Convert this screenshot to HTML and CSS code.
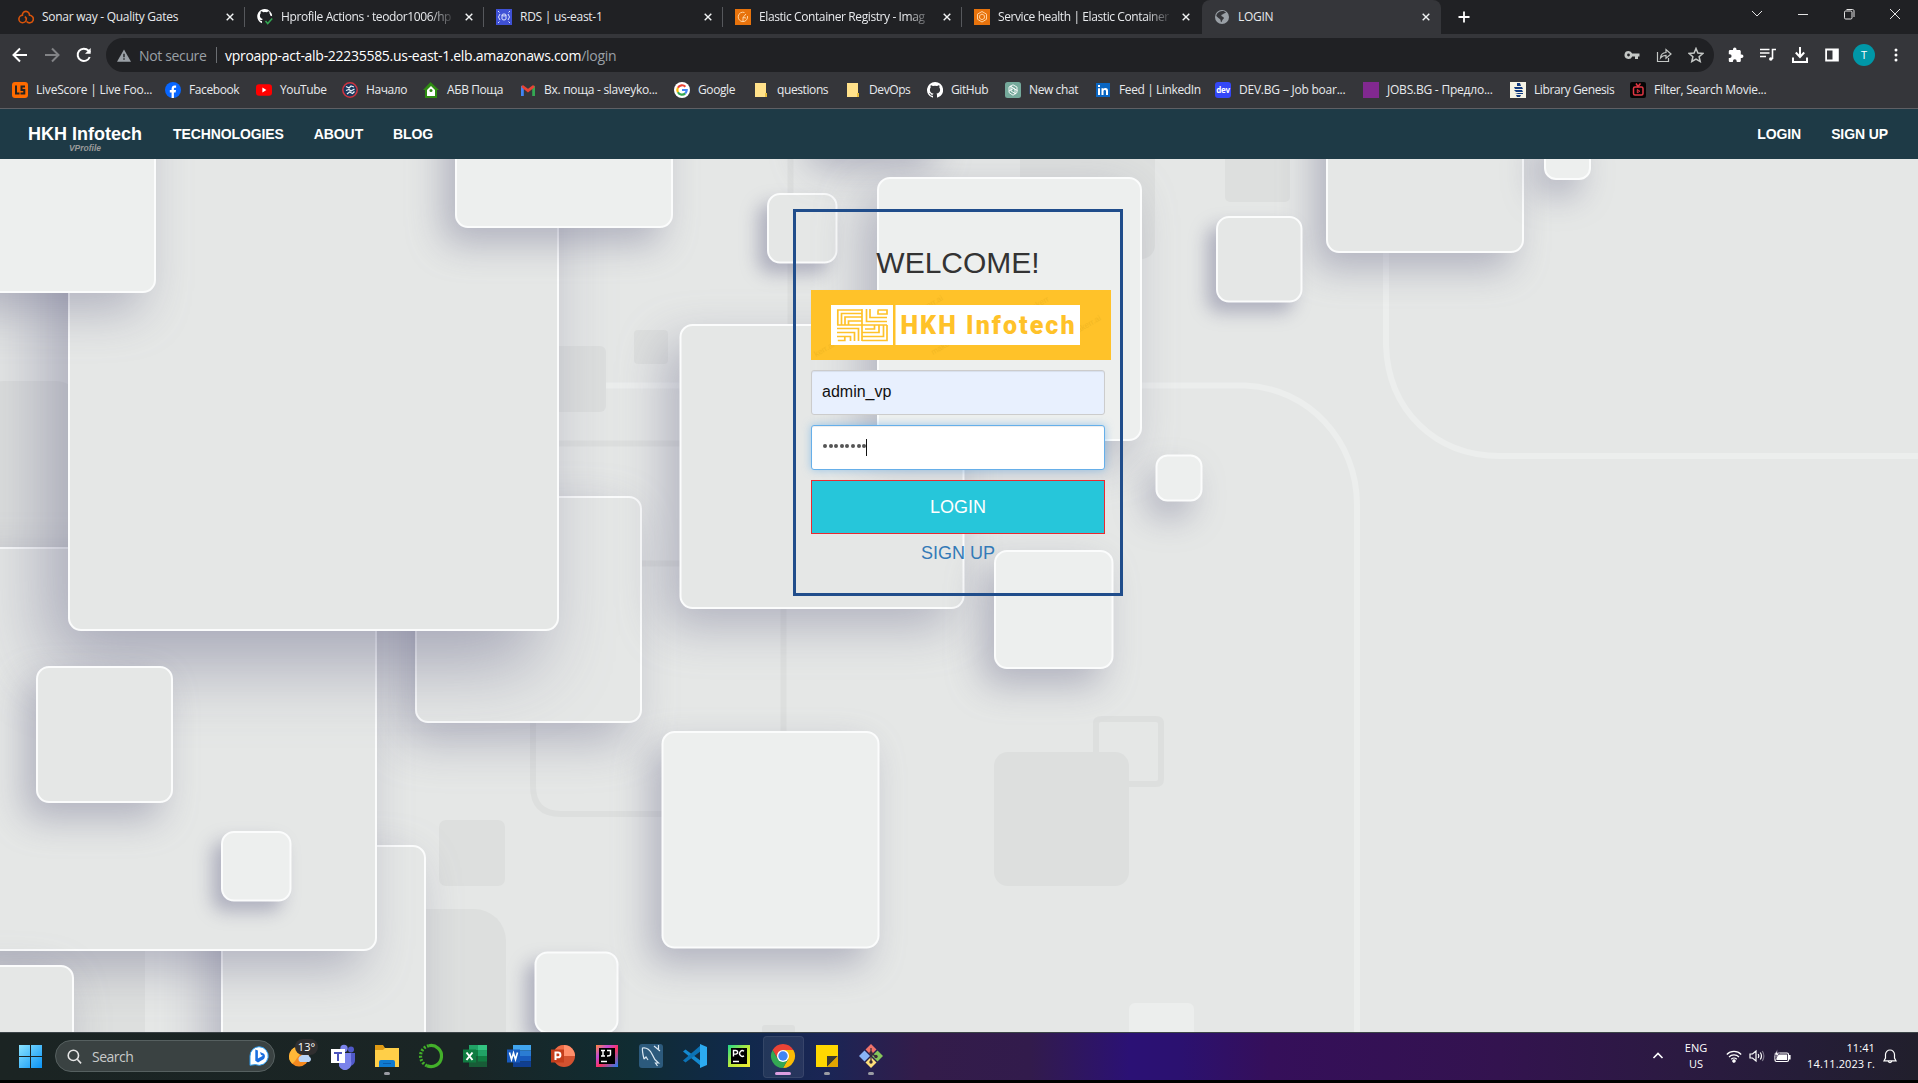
FILE: index.html
```html
<!DOCTYPE html>
<html lang="en">
<head>
<meta charset="utf-8">
<title>LOGIN</title>
<link rel="stylesheet" href="styles.css">
</head>
<body>
<header class="browser">
  <div class="tabs">
    <div class="tab">
      <svg class="ico" viewBox="0 0 16 16" fill="none" stroke="#d9540b" stroke-width="1.6"><path d="M4.600 7A3.500 3.500 0 1 1 11.300 6.800M4.800 6.300A3.700 3.700 0 1 0 8.300 10.200V8.500M7 7.500L8.300 9.500M11 6.300A3.800 3.800 0 1 1 8.600 12.500"/></svg>
      <span class="title">Sonar way - Quality Gates</span><svg class="close" viewBox="0 0 8 8"><path d="M.7.7l6.600 6.600M7.300.7L.7 7.300"/></svg>
    </div>
    <div class="tab">
      <svg class="ico" viewBox="0 0 16 16"><path fill="#fff" d="M8 0a7.400 7.400 0 0 0-3 14.300V12c-1.500 0-2-.6-2.500-1.500 1.100.2 1.500 1 2.600.6.1-.5.4-.8.7-1C3.900 9.800 2.900 8.500 2.900 6.600c0-1 .3-1.700.8-2.300-.1-.5-.1-1.200.2-2 1 0 1.600.5 2.200.9a8 8 0 0 1 3.900 0c.6-.4 1.300-.9 2.200-.9.3.8.3 1.500.2 2 .5.6.8 1.300.8 2.300l1.900.7A7.400 7.400 0 0 0 8 0z"/><path d="M8.500 12l2.200 2.600 4.500-5" fill="none" stroke="#34a853" stroke-width="1.500"/></svg>
      <span class="title fade">Hprofile Actions · teodor1006/hp</span><svg class="close" viewBox="0 0 8 8"><path d="M.7.7l6.600 6.600M7.300.7L.7 7.300"/></svg>
    </div>
    <div class="tab">
      <svg class="ico" viewBox="0 0 16 16"><path fill="#3f51d5" d="M0 0h16v16H0z"/><g fill="none" stroke="#dfe4ff"><ellipse cx="8" cy="6" rx="2" ry="1"/><path d="M6 6v4c0 1.300 4 1.300 4 0V6M4 5L2.500 8 4 11M12 5l1.500 3L12 11"/><path d="M2 2l1.500 1.500M14 2l-1.500 1.500M2 14l1.500-1.500M14 14l-1.500-1.500"/></g></svg>
      <span class="title">RDS | us-east-1</span><svg class="close" viewBox="0 0 8 8"><path d="M.7.7l6.600 6.600M7.300.7L.7 7.300"/></svg>
    </div>
    <div class="tab">
      <svg class="ico" viewBox="0 0 16 16"><path fill="#e8730c" d="M0 0h16v16H0z"/><g fill="none" stroke="#ffd2a0" stroke-width="1"><path d="M9.500 3.500A4.700 4.700 0 1 0 12.500 7M8 12V8.500l3-3.500M8 8.500L11 9"/></g></svg>
      <span class="title fade">Elastic Container Registry - Imag</span><svg class="close" viewBox="0 0 8 8"><path d="M.7.7l6.600 6.600M7.300.7L.7 7.300"/></svg>
    </div>
    <div class="tab">
      <svg class="ico" viewBox="0 0 16 16"><path fill="#e8730c" d="M0 0h16v16H0z"/><g fill="none" stroke="#ffd2a0" stroke-width="1"><path d="M8 2.500l4.500 2.600v5.200L8 13l-4.500-2.700V5.100z"/><path d="M8 5l2.400 1.500v2.800L8 10.700 5.600 9.300V6.500z"/></g></svg>
      <span class="title fade">Service health | Elastic Container</span><svg class="close" viewBox="0 0 8 8"><path d="M.7.7l6.600 6.600M7.300.7L.7 7.300"/></svg>
    </div>
    <div class="tab active">
      <svg class="ico" viewBox="0 0 16 16"><circle cx="8" cy="8" r="7" fill="#9aa0a6"/><path fill="#35363a" d="M8 2c1.500-.3 3 .4 4 1.400-.8.8-2 .5-2.500 1.400-.4.9-2 .6-2.200 1.700-.2.900 1.500 1 2.200 1.700.8.8.2 1.800-.7 2.200-.7.300-.6 2-1.500 2.800-.9-.5-.4-2-1-2.800C5.500 9.500 3.500 8.500 2.300 7 2.500 4.500 5 2.200 8 2z"/></svg>
      <span class="title">LOGIN</span><svg class="close" viewBox="0 0 8 8"><path d="M.7.7l6.600 6.600M7.300.7L.7 7.300"/></svg>
    </div>
    <svg class="plus" viewBox="0 0 12 12"><path d="M6 .5v11M.5 6h11"/></svg>
    <div class="winctl">
      <svg viewBox="0 0 12 12"><path d="M1 3l5 5 5-5"/></svg>
      <svg viewBox="0 0 12 12"><path d="M1 6.500h10"/></svg>
      <svg viewBox="0 0 12 12"><rect x="1.500" y="3" width="7.500" height="8" rx="1.200"/><path d="M3.500 1.500h6c1 0 1.500.6 1.500 1.500v6"/></svg>
      <svg viewBox="0 0 12 12"><path d="M1 1l10 10M11 1L1 11"/></svg>
    </div>
  </div>
  <div class="toolbar">
    <div class="navbtns">
      <svg viewBox="0 0 16 16"><path d="M15 8H2M8 1.500L1.500 8 8 14.500"/></svg>
      <svg class="off" viewBox="0 0 16 16"><path d="M1 8h13M8 1.500L14.500 8 8 14.500"/></svg>
      <svg viewBox="0 0 16 16"><path d="M13.700 10A6.200 6.200 0 1 1 12.500 3.700L14 5.200"/><path d="M14.700 1v5.700H9z" fill="#fff" stroke="none"/></svg>
    </div>
    <div class="omnibox">
      <svg class="warn" viewBox="0 0 16 14"><path fill="#9aa0a6" d="M8 0l8 14H0z"/><path fill="#202124" d="M7.200 5h1.600v4H7.200zM7.200 10.200h1.600v1.600H7.200z"/></svg>
      <span class="sec">Not secure</span><i class="bar"></i>
      <span class="url">vproapp-act-alb-22235585.us-east-1.elb.amazonaws.com<em>/login</em></span>
      <span class="obicons">
        <svg viewBox="0 0 16 16"><path fill="#c4c7c5" fill-rule="evenodd" d="M4.500 4a4 4 0 1 0 3.700 5.500H11V12h3V9.500h1.500v-3H8.200A4 4 0 0 0 4.500 4zm0 2.600a1.400 1.400 0 1 1 0 2.800 1.400 1.400 0 0 1 0-2.800z"/></svg>
        <svg viewBox="0 0 16 16" fill="none" stroke="#c4c7c5" stroke-width="1.200"><path d="M1.500 5v9.500h11V11M4.500 11c.3-3.500 2-5.300 5.500-5.500V2.500L15 7l-5 4.200V8.300C7.500 8.300 6 9 4.500 11z"/></svg>
        <svg viewBox="0 0 16 16" fill="none" stroke="#c4c7c5" stroke-width="1.500"><path d="M8 1.500l1.900 4.600 4.900.4-3.700 3.200 1.100 4.800L8 12l-4.200 2.500 1.100-4.800L1.200 6.500l4.900-.4z"/></svg>
      </span>
    </div>
    <div class="tools">
      <svg viewBox="0 0 16 16"><path fill="#fff" d="M13.700 7.400h-.9V4.600c0-.9-.6-1.500-1.500-1.500H8.500v-.9a1.700 1.700 0 0 0-3.500 0v.9H2.200C1.300 3.100.8 3.700.8 4.600v2.600h.9a1.900 1.900 0 0 1 0 3.800h-.9v2.700c0 .9.600 1.400 1.400 1.400h2.700v-.9a1.900 1.900 0 0 1 3.800 0v.9h2.600c.9 0 1.500-.6 1.500-1.400v-2.800h.9a1.750 1.750 0 0 0 0-3.500z"/></svg>
      <svg viewBox="0 0 16 16" fill="none" stroke="#fff" stroke-width="1.600"><path d="M0 2.500h9.500M0 6h9.500M0 9.500h6M12.500 12V2.500H16"/><circle cx="10.800" cy="12" r="1.800" fill="#fff" stroke="none"/></svg>
      <svg viewBox="0 0 16 16" fill="none" stroke="#fff" stroke-width="2"><path d="M8 0v9.500M3.800 5.500L8 10l4.200-4.500M1 10.500V15h14v-4.500"/></svg>
      <svg viewBox="0 0 16 16"><path fill="#fff" fill-rule="evenodd" d="M1.200 1.500h13.600v13H1.200zM3 3.500v9h5.500v-9z"/></svg>
      <span class="avatar">T</span>
      <svg viewBox="0 0 16 16" fill="#fff"><circle cx="8" cy="3" r="1.500"/><circle cx="8" cy="8" r="1.500"/><circle cx="8" cy="13" r="1.500"/></svg>
    </div>
  </div>
  <nav class="bookmarks">
    <a><svg class="ico" viewBox="0 0 16 16"><rect width="16" height="16" rx="3" fill="#ff6b00"/><path fill="none" stroke="#222" stroke-width="2" d="M4 3.500V11.500H7.500M13 4.500H9.500V8H12.300V11.500H8.500"/></svg>LiveScore | Live Foo...</a>
    <a><svg class="ico" viewBox="0 0 16 16"><circle cx="8" cy="8" r="8" fill="#0866ff"/><path fill="#fff" d="M6.600 16v-5.400H4.800V8.100h1.800V6.800c0-2.300 1.200-3.400 3-3.400.6 0 1.200.1 1.500.2v2.200h-1c-.9 0-1.200.5-1.200 1.200v1.100H11l-.4 2.500H8.900V16z"/></svg>Facebook</a>
    <a><svg class="ico" viewBox="0 0 16 16"><rect y="2.300" width="16" height="11.400" rx="3" fill="#f00"/><path fill="#fff" d="M6.400 5.600v4.800l4-2.400z"/></svg>YouTube</a>
    <a><svg class="ico" viewBox="0 0 16 16"><circle cx="8" cy="8" r="7.200" fill="#17385c" stroke="#cf3440" stroke-width="1.500"/><path d="M4 4.500l3 1.500 2-2 3 1M4 8.500l3-1 2 1.500 3.500-2M5 12l2.500-2 3 1.500 2-2" fill="none" stroke="#e8eef5" stroke-width="1.300"/></svg>Начало</a>
    <a><svg class="ico" viewBox="0 0 16 16"><path fill="#2e8b12" d="M7.500 0L16 8h-2v8H2V8H0z"/><path fill="#fff" d="M8 4L12 8v6H4V8z"/><circle cx="8" cy="8.500" r="1.500" fill="#2e8b12"/></svg>АБВ Поща</a>
    <a><svg class="ico" viewBox="0 0 16 16"><path fill="#4285f4" d="M1 3.500l2.800 2V14H1z"/><path fill="#34a853" d="M15 3.500l-2.800 2V14H15z"/><path fill="none" stroke="#ea4335" stroke-width="2.800" d="M2 4l6 4.700L14 4"/></svg>Вх. поща - slaveyko...</a>
    <a><svg class="ico" viewBox="0 0 16 16"><circle cx="8" cy="8" r="8" fill="#fff"/><g fill="none" stroke-width="2.200"><path stroke="#ea4335" d="M3.900 5.700A4.700 4.700 0 0 1 11.400 4.700"/><path stroke="#fbbc05" d="M3.900 5.700A4.700 4.700 0 0 0 3.900 10.300"/><path stroke="#34a853" d="M3.900 10.300A4.700 4.700 0 0 0 11.200 11.400"/><path stroke="#4285f4" d="M11.200 11.400A4.700 4.700 0 0 0 12.700 8H8"/></g></svg>Google</a>
    <a><svg class="ico" viewBox="0 0 16 16"><path fill="#ffe18a" d="M2 1h11v10.500h1V15H2z"/><path fill="#e7bd3e" d="M12 11h2v4h-2z"/></svg>questions</a>
    <a><svg class="ico" viewBox="0 0 16 16"><path fill="#ffe18a" d="M2 1h11v10.500h1V15H2z"/><path fill="#e7bd3e" d="M12 11h2v4h-2z"/></svg>DevOps</a>
    <a><svg class="ico" viewBox="0 0 16 16"><path fill="#fff" d="M8 0a8 8 0 0 0-2.500 15.600c.4.1.5-.2.500-.4v-1.500c-2.200.5-2.700-.9-2.700-.9-.4-.9-.9-1.200-.9-1.200-.7-.5.100-.5.100-.5.800.1 1.200.8 1.200.8.700 1.300 1.900.9 2.300.7.100-.5.300-.9.500-1.100-1.800-.2-3.600-.9-3.600-4 0-.8.300-1.600.8-2.100-.1-.2-.4-1 .1-2.100 0 0 .7-.2 2.200.8a7.500 7.500 0 0 1 4 0c1.500-1 2.200-.8 2.200-.8.500 1.100.2 1.900.1 2.100.5.600.8 1.300.8 2.100 0 3.100-1.900 3.800-3.700 4 .3.200.6.700.6 1.500v2.200c0 .2.100.5.600.4A8 8 0 0 0 8 0z"/></svg>GitHub</a>
    <a><svg class="ico" viewBox="0 0 16 16"><rect width="16" height="16" rx="2.500" fill="#75a99b"/><g fill="none" stroke="#fff" stroke-width=".9"><path d="M8 2.800l4 2.300v5.400l-4 2.700-4-2.700V5.100z"/><path d="M6 4v5l5 3M10 12V7L5 4M4 9l4.500-2.500 4 2"/></g></svg>New chat</a>
    <a><svg class="ico" viewBox="0 0 16 16"><rect x="1" y="1" width="14" height="14" fill="#0a66c2"/><path fill="#fff" d="M3 6.200h2V13H3zM3 3h2v2H3zM6.500 6.200h2v.9c.9-1.500 4.500-1.500 4.500 1.600V13h-2V9.300c0-1.800-2.500-1.600-2.500 0V13h-2z"/></svg>Feed | LinkedIn</a>
    <a><span class="dev">dev</span>DEV.BG – Job boar...</a>
    <a><svg class="ico" viewBox="0 0 16 16"><path fill="#812990" d="M0 0h16v16H0z"/></svg>JOBS.BG - Предло...</a>
    <a><svg class="ico" viewBox="0 0 16 16"><path fill="#f5f3e4" d="M0 0h16v16H0z"/><path fill="#123a7d" d="M7 1h3l1 3H7zM4 5h8l1 2H5zM4 8h8l1 2H6zM5 11h8v1H8zM6 13h5l-1 2H7z"/></svg>Library Genesis</a>
    <a><svg class="ico" viewBox="0 0 16 16"><rect width="16" height="16" rx="2" fill="#050505"/><g fill="none" stroke="#e23744" stroke-width="1.500"><rect x="3.500" y="5" width="9.500" height="8" rx="1.500"/><path d="M6 1.500l2 3 2.500-3"/><path d="M7.300 7.500v3.300l2.500-1.600z" stroke-width="1"/></g></svg>Filter, Search Movie...</a>
  </nav>
</header>

<div class="site-nav">
  <div class="brand">HKH Infotech<small>VProfile</small></div>
  <a>TECHNOLOGIES</a><a>ABOUT</a><a>BLOG</a>
  <a class="push">LOGIN</a><a>SIGN UP</a>
</div>

<main class="page">
  <svg class="scene" viewBox="0 159 1918 873" preserveAspectRatio="none">
    <rect y="159" width="1918" height="873" fill="#e5e7e6"/>
    <!-- flat background shapes -->
    <g fill="#dddfde">
      <rect x="-20" y="381" width="100" height="300" rx="24"/>
      <rect x="540" y="346" width="66" height="66" rx="6"/>
      <rect x="634" y="330" width="34" height="34" rx="4"/>
      <rect x="1020" y="100" width="135" height="159" rx="14"/>
      <rect x="1225" y="140" width="65" height="62" rx="5"/>
      <rect x="439" y="820" width="66" height="66" rx="7"/>
      <rect x="370" y="909" width="136" height="160" rx="32"/>
      <rect x="0" y="940" width="145" height="100"/>
      <rect x="762" y="1025" width="33" height="20" rx="3"/>
      <rect x="994" y="752" width="135" height="134" rx="14"/>
    </g>
    <g fill="none" stroke="#dddfde" stroke-width="6">
      <path d="M1096 752V724q0-5 5-5h55q5 0 5 5v55q0 5-5 5h-28"/>
      <path d="M540 443.500H700M630 563.500H700M783.500 600V740M790.500 159V330M533 715V786Q533 814 561 814H670"/>
    </g>
    <g fill="none" stroke="#eceeed" stroke-width="6">
      <path d="M606 385.500H690M1130 385.500H1245C1308 388 1357 440 1357 505V1040M1386 240V345C1388 410 1435 456 1500 456H1918"/>
    </g>
    <rect x="1129" y="1003" width="65" height="60" rx="6" fill="#eceeed"/>
    <!-- raised cards -->
    <g class="tile">
      <rect class="s-l" x="222" y="846" width="203" height="240" rx="12"/>
      <rect class="s-l" x="416" y="497" width="225" height="225" rx="12"/>
      <rect class="s-l" x="-30" y="548" width="406" height="402" rx="12"/>
      <rect class="s-l" x="-30" y="966" width="103" height="120" rx="12"/>
      <rect class="s-xl" x="69" y="60" width="489" height="570" rx="12"/>
      <rect class="s-m" x="37" y="667" width="135" height="135" rx="12"/>
      <rect class="s-m" x="1327" y="60" width="196" height="192" rx="12"/>
      <rect class="s-l" x="680.500" y="325" width="283" height="283" rx="12"/>
      <rect class="s-s" x="768" y="194" width="68.500" height="68.500" rx="12"/>
      <rect class="s-s" x="1217" y="217" width="84.500" height="84.500" rx="12"/>
    </g>
    <g class="tile light">
      <rect class="s-l" x="-30" y="60" width="185" height="232" rx="12"/>
      <rect class="s-m" x="456" y="60" width="216" height="167" rx="12"/>
      <rect class="s-m" x="820" y="90" width="125" height="62" rx="12"/>
      <rect class="s-l" x="878" y="178" width="263" height="262" rx="12"/>
      <rect class="s-s" x="222" y="832" width="68.500" height="68.500" rx="12"/>
      <rect class="s-s" x="535.500" y="952.500" width="82" height="80" rx="12"/>
      <rect class="s-m" x="662.500" y="732" width="216" height="215.500" rx="12"/>
      <rect class="s-m" x="995" y="551" width="117.500" height="117" rx="12"/>
      <rect class="s-f" x="1156.500" y="455.500" width="45" height="45" rx="11"/>
      <rect class="s-f" x="1545" y="130" width="45" height="49" rx="11"/>
    </g>
  </svg>
  <form class="login">
    <h2>WELCOME!</h2>
    <svg class="logo" viewBox="0 0 300 70">
      <path fill="#ffc229" d="M0 0h300v70H0z"/>
      <g class="wm" fill="#f3b823"><text transform="translate(104 26) rotate(-30)">makerr.ai</text><text transform="translate(122 65) rotate(-30)">makerr</text><text transform="translate(217 23) rotate(-30)">makerr</text><text transform="translate(262 46) rotate(-30)">makerr.ai</text><text transform="translate(5 67) rotate(-30)">kerr.ai</text></g>
      <path fill="#fff" d="M20 15h62v40H20zM84.500 15H269v40H84.500z"/>
      <g fill="none" stroke="#ffc229" stroke-width="1.700">
        <path d="M26.800 35V20H51M30.500 35V23.500H51M34 35v-8H51M37.500 35v-4H51M51 19v32M26 35H76M55.500 19v12.500H76M59 19v8.500H76M62.500 19v0M67 20.500V24h9V20h-9.500M26 38.500H47.500V51M26 42.500H43.500V51M26 46.500H39.500V51M26.800 50.500h7V47M51 50.500H76V35M51 46.500H72.500V35M51 42.500H68V35M54 39H63.500V35"/>
      </g>
      <text class="lt" x="89.500" y="44" textLength="174">HKH Infotech</text>
    </svg>
    <div class="field user">admin_vp</div>
    <div class="field pass"><span class="dots"><i></i><i></i><i></i><i></i><i></i><i></i><i></i><i></i></span><span class="caret"></span></div>
    <div class="btn">LOGIN</div>
    <a class="signup">SIGN UP</a>
  </form>
</main>

<footer class="taskbar">
  <svg class="start" viewBox="0 0 23 23"><defs><linearGradient id="w" x2="1" y2="1"><stop stop-color="#8be4ff"/><stop offset="1" stop-color="#0a93f5"/></linearGradient></defs><path fill="url(#w)" d="M0 0h11v11H0zM12 0h11v11H12zM0 12h11v11H0zM12 12h11v11H12z"/></svg>
  <div class="search">
    <svg class="mag" viewBox="0 0 16 16"><circle cx="6.800" cy="6.800" r="5.500"/><path d="M11 11l4 4.300"/></svg>
    <span>Search</span>
    <svg class="bing" viewBox="0 0 20 20"><path fill="#fff" stroke="#2a9bf0" d="M10 .7a9.300 9.300 0 1 1-3.600 17.900L1 19.300V10A9.200 9.200 0 0 1 10 .7z"/><path fill="#1b6fe0" d="M6.300 3.500l2.600 1v8l5-2.800-2-1-.9-2.600 4 1.600c1.600 1.800 1 4.300-.5 5.500L9 16.500l-2.700-1.800z"/></svg>
  </div>
  <div class="apps">
    <span><svg viewBox="0 0 32 32"><circle cx="16" cy="16.500" r="10" fill="#f58a1f"/><path fill="#ffb838" d="M16 6.500a10 10 0 0 0-7 17c3-1 4-5 8-9z"/><path fill="#b9d4f6" d="M17 22a3.500 3.500 0 0 1 1-6.300 5 5 0 0 1 8.500 1A2.900 2.900 0 0 1 26 22z"/></svg><b class="deg">13°</b></span>
    <span><svg viewBox="0 0 32 32"><circle cx="17" cy="8.500" r="3.700" fill="#7b83eb"/><circle cx="24" cy="9.500" r="3" fill="#5059c9"/><path fill="#5059c9" d="M20 13h8v7c0 4-3 6-6 6z"/><path fill="#7b83eb" d="M12 13h12v8a6 6 0 0 1-12 5z"/><rect x="4" y="9" width="14" height="14" fill="#fff"/><path fill="#4b53bc" d="M7 12h8v2h-3v7h-2v-7H7z"/></svg></span>
    <span class="run"><svg viewBox="0 0 32 32"><path fill="#e09b14" d="M4 5h8l2 3h14v5H4z"/><path fill="#ffcf48" d="M4 10h8l2-2h14v19H4z"/><path fill="#0f7ad0" d="M8 27v-5q0-2 2-2h12q2 0 2 2v5z"/><path stroke="#0a5cab" d="M12 23.500h8"/></svg></span>
    <span><svg viewBox="0 0 32 32" fill="none" stroke="#43b02a" stroke-width="3.200"><path d="M14 5.700A10.500 10.500 0 1 1 12 25.700"/><path stroke-dasharray="2 1.500" d="M12 25.700A10.500 10.500 0 0 1 14 5.700"/></svg></span>
    <span><svg viewBox="0 0 32 32"><path fill="#21a366" d="M10 5h18v5.500H10z"/><path fill="#107c41" d="M10 10h18v6H10z"/><path fill="#185c37" d="M10 16h18v11H10z"/><path fill="#33c481" d="M19 5h9v5.500h-9z"/><path fill="#21a366" d="M19 10.500h9V16h-9z"/><path fill="#107c41" d="M19 16h9v5.500h-9z"/><rect x="4" y="9.500" width="13" height="13" fill="#107c41"/><path stroke="#fff" stroke-width="2" d="M7.500 12.500l6 7.500M13.500 12.500l-6 7.500"/></svg></span>
    <span><svg viewBox="0 0 32 32"><path fill="#41a5ee" d="M10 5h18v5.500H10z"/><path fill="#2b7cd3" d="M10 10.500h18V16H10z"/><path fill="#185abd" d="M10 16h18v5.500H10z"/><path fill="#103f91" d="M10 21.500h18V27H10z"/><rect x="4" y="9.500" width="13" height="13" fill="#185abd"/><path fill="none" stroke="#fff" stroke-width="1.600" d="M6.500 12.500l2 7 2-6.500 2 6.500 2-7"/></svg></span>
    <span><svg viewBox="0 0 32 32"><circle cx="17" cy="16" r="11" fill="#d35230"/><path fill="#ff8f6b" d="M17 5a11 11 0 0 1 11 11H17z"/><path fill="#ed6c47" d="M17 5a11 11 0 0 0-11 11h11z"/><rect x="4" y="9.500" width="13" height="13" fill="#c43e1c"/><path fill="none" stroke="#fff" stroke-width="2" d="M8.500 20v-7.500H11a2.400 2.400 0 0 1 0 4.800H8.500"/></svg></span>
    <span><svg viewBox="0 0 32 32"><defs><linearGradient id="ij" x2="1" y2="1"><stop stop-color="#ff8a3c"/><stop offset=".3" stop-color="#c24bd6"/><stop offset=".55" stop-color="#fe315d"/><stop offset="1" stop-color="#1d7ff7"/></linearGradient></defs><path fill="url(#ij)" d="M5 5h22v22H5z"/><path d="M8 8h16v16H8z"/><path fill="none" stroke="#fff" stroke-width="1.400" d="M10 10.500h4M12 10.500v5.500M10 16h4M16 10.500h3.500v4q0 1.500-3.500 1.500M10 21.500h6"/></svg></span>
    <span><svg viewBox="0 0 32 32"><rect x="4" y="4" width="24" height="24" rx="3" fill="#2c5a7c"/><path fill="none" stroke="#dbe8f2" stroke-width="1.200" d="M9 19c-1-4-2-8-1.500-11 4-1 8 2 10 7 1 3 2 5 6 8h-3l2 3M9 19l2-2 2 3M19 6l6 5M23.500 5v4"/></svg></span>
    <span><svg viewBox="0 0 32 32"><path fill="#1489d0" d="M4 11.500l2.500-2L22 21v5z"/><path fill="#0c72b5" d="M4 20.500L22 5v6L6.500 22.500z"/><path fill="#2cabf1" d="M21 4l7 3v18l-7 3z"/></svg></span>
    <span><svg viewBox="0 0 32 32"><defs><linearGradient id="pc" x2="1" y2="1"><stop stop-color="#21d789"/><stop offset=".5" stop-color="#b9ea3b"/><stop offset="1" stop-color="#f5ec32"/></linearGradient></defs><path fill="url(#pc)" d="M5 5h22v22H5z"/><path d="M8 8h16v16H8z"/><path fill="none" stroke="#fff" stroke-width="1.400" d="M10.500 16.500v-6h2.300a1.800 1.800 0 0 1 0 3.600h-2.300M21 11.200a2.800 2.800 0 1 0 0 4.600M10 21.500h6"/></svg></span>
    <span class="cur"><svg viewBox="0 0 32 32"><path fill="#ea4335" d="M16 4a12 12 0 0 1 10.400 6H16L10.800 19 5.600 10A12 12 0 0 1 16 4z"/><path fill="#fbbc05" d="M26.400 10A12 12 0 0 1 16 28l5.200-9L16 10z"/><path fill="#34a853" d="M5.600 10A12 12 0 0 0 16 28l5.200-9H10.800z"/><circle cx="16" cy="16" r="6" fill="#fff"/><circle cx="16" cy="16" r="4.700" fill="#4285f4"/></svg></span>
    <span class="run"><svg viewBox="0 0 32 32"><path fill="#ffd800" d="M5 5h22v22H5z"/><path fill="#3b3a30" d="M16 27V16h11z"/><path fill="#e3a500" d="M16 27L27 16v11z"/></svg></span>
    <span class="run"><svg viewBox="0 0 32 32"><path fill="#f0726a" d="M16 4l5.500 5.500L16 15l-5.500-5.500z"/><path fill="#8ab4f8" d="M9.500 10.500L15 16l-5.500 5.500L4 16z"/><path fill="#86c65b" d="M22.500 10.500L28 16l-5.500 5.500L17 16z"/><path fill="#ffe07a" d="M16 17l5.500 5.500L16 28l-5.500-5.500z"/><g fill="#3a2b38"><circle cx="16" cy="13" r="1.700"/><circle cx="16" cy="22" r="1.700"/><circle cx="21" cy="16.500" r="1.700"/><path d="M15.400 8h1.200v14h-1.200zM16 12l5 4-.8 1-5-4z"/></g></svg></span>
  </div>
  <div class="tray">
    <svg class="up" viewBox="0 0 12 12"><path d="M1.500 8L6 3.500 10.500 8"/></svg>
    <div class="lang">ENG<br>US</div>
    <svg class="wifi" viewBox="0 0 16 14"><path d="M.8 5.500a10 10 0 0 1 14.400 0M3 8a7 7 0 0 1 10 0M5.200 10.200a4 4 0 0 1 5.600 0"/><circle cx="8" cy="12" r="1.200" fill="#fff"/></svg>
    <svg class="snd" viewBox="0 0 16 14"><path d="M1 5h2.500L7 2v10L3.500 9H1zM9.200 5q1.300 2 0 4M11.300 3.500q2.400 3.500 0 7"/><path opacity=".4" d="M13.300 2q3.200 5 0 10"/></svg>
    <svg class="bat" viewBox="0 0 17 14"><rect x="1" y="4" width="13.500" height="8.500" rx="1.500"/><path fill="#fff" d="M3 6h9.500v4.500H3zM15 6.500h1v3.500h-1z"/><path fill="#fff" stroke="#2a1b40" stroke-width=".6" d="M3.500.5L0 6h2.500L1.500 9.500 5.500 4H3.200z"/></svg>
    <div class="clock">11:41<br>14.11.2023 г.</div>
    <svg class="bell" viewBox="0 0 14 15"><path d="M7 1a4.500 4.500 0 0 0-4.500 4.500V9L1 11.800h12L11.500 9V5.500A4.500 4.500 0 0 0 7 1zM5 12q2 3.500 4 0"/></svg>
  </div>
</footer>
</body>
</html>
```
FILE: styles.css
```css
* { box-sizing: border-box; }
body {
  margin: 0; width: 1918px; height: 1083px; overflow: hidden; background: #000;
  display: flex; flex-direction: column;
  font-family: "Open Sans", "Noto Sans", sans-serif; color: #fff;
}
svg { display: block; flex: none; }

/* browser chrome */
.browser { height: 109px; background: #35363a; border-bottom: 1px solid #5f6064; display: flex; flex-direction: column; font-size: 12px; }
.tabs { height: 34px; background: #202124; display: flex; align-items: center; padding-left: 6px; }
.tab { width: 239px; height: 34px; display: flex; align-items: center; padding: 0 11px 0 12px; position: relative; }
.tab::after { content: ""; position: absolute; right: 0; top: 7px; width: 1px; height: 20px; background: #56585c; }
.tab.active::after, .tab:nth-child(5)::after { display: none; }
.tab.active { background: #35363a; border-radius: 8px 8px 0 0; margin-left: 1px; }
.ico { width: 16px; height: 16px; }
.title { flex: 1; margin-left: 8px; margin-right: 8px; white-space: nowrap; letter-spacing: -.27px; color: #e8eaed; line-height: 20px; }
.title.fade { letter-spacing: -.4px; -webkit-mask-image: linear-gradient(90deg, #000 84%, rgba(0, 0, 0, .15) 97%); mask-image: linear-gradient(90deg, #000 84%, rgba(0, 0, 0, .15) 97%); }
.close { width: 8px; height: 8px; stroke: #f1f3f4; stroke-width: 1.4; }
.plus { width: 12px; height: 12px; stroke: #fff; stroke-width: 1.8; margin-left: 17px; }
.winctl { margin-left: auto; display: flex; gap: 34px; padding: 0 17px 6px 0; }
.winctl svg { width: 12px; height: 12px; fill: none; stroke: #e4e4e4; stroke-width: 1; }
.toolbar { height: 42px; display: flex; align-items: center; }
.navbtns { width: 106px; display: flex; gap: 16px; padding-left: 12px; }
.navbtns svg { width: 16px; height: 16px; fill: none; stroke: #fff; stroke-width: 2; }
.navbtns .off { stroke: #828386; }
.omnibox { width: 1608px; height: 34px; border-radius: 17px; background: #202124; display: flex; align-items: center; padding: 0 10px 0 11px; font-size: 14px; }
.warn { width: 14px; height: 13px; }
.sec { width: 68px; margin-left: 8px; color: #9aa0a6; letter-spacing: -.35px; white-space: nowrap; }
.bar { width: 1px; height: 16px; background: #6b6e72; margin: 0 8px 0 9px; }
.url { letter-spacing: -.29px; }
.url em { font-style: normal; color: #9aa0a6; }
.obicons { margin-left: auto; display: flex; gap: 16px; }
.obicons svg { width: 16px; height: 16px; }
.tools { display: flex; gap: 16px; align-items: center; padding-left: 14px; }
.tools svg { width: 16px; height: 16px; }
.avatar { width: 22px; height: 22px; border-radius: 50%; background: #0097a7; margin: 0 -3px; text-align: center; line-height: 22px; font-size: 11px; }
.bookmarks {
  height: 27px; display: grid; padding-left: 12px; align-items: center;
  grid-template-columns: 153px 91px 86px 81px 97px 154px 79px 92px 82px 78px 90px 120px 148px 147px 120px 150px;
}
.bookmarks a { display: flex; align-items: center; gap: 8px; white-space: nowrap; letter-spacing: -.4px; line-height: 16px; color: #e8eaed; }
.bookmarks a:nth-child(1), .bookmarks a:nth-child(14), .bookmarks a:nth-child(13) { letter-spacing: -.22px; }
.bookmarks a:nth-child(6), .bookmarks a:nth-child(16) { letter-spacing: -.28px; }
.dev { width: 16px; height: 16px; border-radius: 3px; background: #3447f7; color: #fff; font-weight: 700; font-size: 8px; line-height: 15px; text-align: center; flex: none; }

/* site navigation */
.site-nav { height: 50px; background: #1e3a46; display: flex; align-items: center; padding: 0 30px 0 28px; gap: 30px; font: bold 14px "Liberation Sans", Arial, sans-serif; letter-spacing: -.1px; }
.brand { font-size: 18px; line-height: 20px; position: relative; margin-right: 1px; letter-spacing: 0; }
.brand small { position: absolute; left: 0; right: 0; top: 20px; text-align: center; font: italic bold 8.500px/8px "Liberation Sans", Arial, sans-serif; color: #9a9a9a; }
.push { margin-left: auto; }

/* page */
.page { height: 873px; position: relative; padding-top: 50px; font-family: "Liberation Sans", Arial, sans-serif; overflow: hidden; }
.scene { position: absolute; left: 0; top: 0; width: 1918px; height: 873px; }
.tile rect { fill: #e5e7e6; stroke: #fbfcfc; stroke-width: 2; }
.tile.light rect { fill: #edefee; }
.tile .s-xl { filter: drop-shadow(-22px 34px 38px rgba(88, 88, 125, .44)); }
.tile .s-l { filter: drop-shadow(-14px 18px 24px rgba(88, 88, 125, .36)); }
.tile .s-m { filter: drop-shadow(-12px 16px 18px rgba(88, 88, 125, .36)); }
.tile .s-s { filter: drop-shadow(-9px 10px 9px rgba(88, 88, 125, .38)); }
.tile .s-f { filter: drop-shadow(-10px 17px 16px rgba(88, 88, 125, .32)); }
.login { position: relative; width: 330px; height: 387px; margin-left: 793px; border: 3px solid #204d8b; padding: 34px 15px 0; display: flex; flex-direction: column; color: #333; }
.login h2 { margin: 0 0 10px; font-weight: 400; font-size: 30px; line-height: 34px; text-align: center; }
.logo { width: 300px; height: 70px; }
.wm { font: 8px "Liberation Sans", sans-serif; }
.lt { font: 900 25px Roboto, "Liberation Sans", sans-serif; fill: #ffc229; }
.field { height: 45px; margin-top: 10px; border: 1px solid #ccc; border-radius: 3px; padding: 0 10px; font-size: 16px; line-height: 42px; color: #111; }
.user { background: #e8f0fe; box-shadow: inset 0 1px 1px rgba(0, 0, 0, .075); }
.pass { background: #fff; border-color: #66afe9; box-shadow: 0 0 8px rgba(102, 175, 233, .6), inset 0 1px 1px rgba(0, 0, 0, .075); display: flex; align-items: center; }
.dots { display: flex; gap: 1.6px; padding: 0 0 3px 1px; }
.dots i { width: 4px; height: 4px; border-radius: 50%; background: #555; }
.caret { width: 1px; height: 17px; background: #111; margin-bottom: 1px; }
.btn { height: 54px; margin-top: 10px; background: #26c6da; border: 1px solid #ea2a30; color: #fff; font-size: 18px; line-height: 52px; text-align: center; }
.signup { margin-top: 9px; font-size: 18px; line-height: 21px; text-align: center; color: #337ab7; }

/* taskbar */
.taskbar {
  height: 48px; border-top: 1px solid #3c4448; display: flex; align-items: center; padding: 0 0 1px 19px;
  background: linear-gradient(90deg, #1b2423 0, #1a2525 460px, #102c32 630px, #10294b 740px, #1b2555 830px, #331c4a 920px, #321b4c 1030px, #2b1175 1130px, #2b1170 1180px, #350f5a 1270px, #33134f 1500px, #2b1a41 1680px, #251d38 1800px, #211f2c 1918px);
}
.start { width: 23px; height: 23px; }
.search { width: 220px; height: 32px; margin-left: 13px; border: 1px solid #566060; border-radius: 16px; background: #3a4242; display: flex; align-items: center; padding: 0 5px 0 11px; font-size: 14px; color: #c8caca; }
.search span { letter-spacing: -.5px; margin-left: 10px; }
.mag { width: 15px; height: 15px; fill: none; stroke: #e6e6e6; stroke-width: 1.7; }
.bing { width: 20px; height: 20px; margin-left: auto; }
.apps { display: flex; margin-left: 2px; }
.apps span { width: 44px; height: 46px; display: flex; align-items: center; justify-content: center; position: relative; }
.apps svg { width: 32px; height: 32px; }
.deg { position: absolute; left: 18px; top: 6px; width: 23px; height: 16px; border-radius: 8px; background: #302f30; font-size: 11px; font-weight: 400; line-height: 16px; text-align: center; }
.run::after, .cur::after { content: ""; position: absolute; bottom: 4px; left: 19px; width: 6px; height: 3px; border-radius: 2px; background: #9a9ca3; }
.cur::before { content: ""; position: absolute; left: 2px; top: 3px; width: 39px; height: 40px; border-radius: 4px; background: rgba(255, 255, 255, .07); border: 1px solid rgba(255, 255, 255, .08); }
.cur svg { position: relative; }
.cur::after { left: 14px; width: 16px; background: #dd9ee0; }
.tray { margin-left: auto; display: flex; align-items: center; padding-right: 21px; font-size: 11px; line-height: 16px; }
.tray svg { fill: none; stroke: #fff; stroke-width: 1.2; position: relative; }
.up { width: 12px; height: 12px; margin-right: 19px; }
.tray .up { stroke-width: 1.6; }
.lang { width: 26px; text-align: center; margin-right: 17px; }
.wifi { width: 16px; height: 14px; margin-right: 7px; }
.snd { width: 16px; height: 14px; margin-right: 9px; }
.bat { width: 17px; height: 14px; }
.clock { width: 84px; text-align: right; letter-spacing: .1px; white-space: nowrap; }
.bell { width: 14px; height: 15px; margin-left: 8px; }
```
